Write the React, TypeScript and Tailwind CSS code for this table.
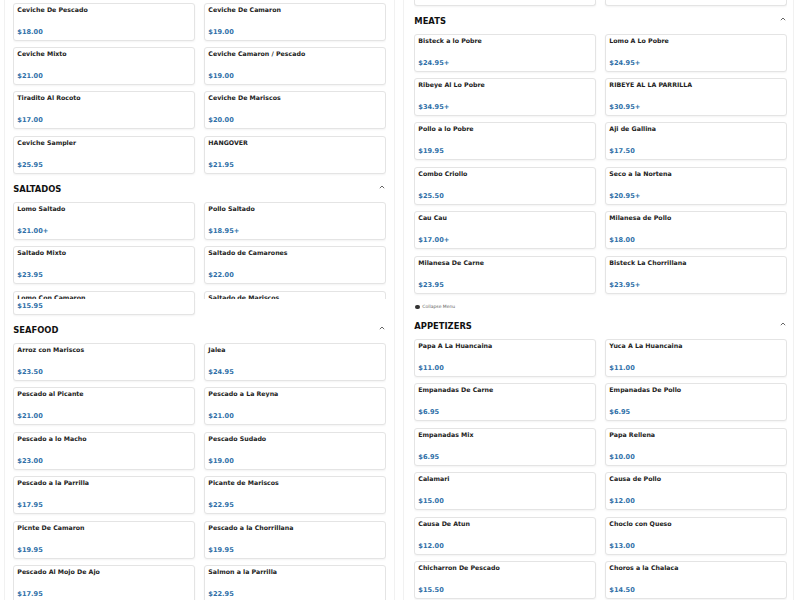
import React from "react";

type Item = { name: string; price?: string };

const FONT = { fontFamily: '"DejaVu Sans", "Liberation Sans", sans-serif' };

function Card({ item }: { item: Item }) {
  return (
    <div className="h-[38px] flex flex-col justify-between rounded-[3px] border border-[#e4e4e4] bg-white pl-[3px] pr-[3px] pt-[2px] pb-[4px] shadow-[0_1px_2px_rgba(0,0,0,0.05)]">
      <div className="text-[6.25px] leading-[8px] font-bold text-[#222] whitespace-nowrap">{item.name}</div>
      <div className="text-[6.6px] leading-[8px] font-bold text-[#2e6fa7] whitespace-nowrap">{item.price ?? ""}</div>
    </div>
  );
}

function Grid({ items }: { items: Item[] }) {
  return (
    <div className="grid grid-cols-2 gap-x-[9.7px] gap-y-[6.4px]">
      {items.map((it, i) => (
        <Card key={i} item={it} />
      ))}
    </div>
  );
}

function Chevron() {
  return (
    <svg width="6" height="4" viewBox="0 0 6 4" className="mb-[4px] mr-[1px]">
      <polyline points="0.8,3.2 3,1 5.2,3.2" fill="none" stroke="#555" strokeWidth="0.9" />
    </svg>
  );
}

function Heading({ title }: { title: string }) {
  return (
    <div className="flex items-center justify-between pt-[9px] pb-[7px]">
      <div className="text-[8.4px] leading-[12px] font-bold text-[#111] tracking-normal">{title}</div>
      <Chevron />
    </div>
  );
}

function PartialCard({ price, h }: { price?: string; h: string }) {
  return (
    <div
      className={`${h} flex flex-col justify-end rounded-b-[3px] border-x border-b border-[#e4e4e4] bg-white pl-[3px] pb-[4px] shadow-[0_1px_2px_rgba(0,0,0,0.05)]`}
    >
      {price ? (
        <div className="text-[6.6px] leading-[8px] font-bold text-[#2e6fa7]">{price}</div>
      ) : null}
    </div>
  );
}

const ceviche: Item[] = [
  { name: "Ceviche De Pescado", price: "$18.00" },
  { name: "Ceviche De Camaron", price: "$19.00" },
  { name: "Ceviche Mixto", price: "$21.00" },
  { name: "Ceviche Camaron / Pescado", price: "$19.00" },
  { name: "Tiradito Al Rocoto", price: "$17.00" },
  { name: "Ceviche De Mariscos", price: "$20.00" },
  { name: "Ceviche Sampler", price: "$25.95" },
  { name: "HANGOVER", price: "$21.95" },
];

const saltados: Item[] = [
  { name: "Lomo Saltado", price: "$21.00+" },
  { name: "Pollo Saltado", price: "$18.95+" },
  { name: "Saltado Mixto", price: "$23.95" },
  { name: "Saltado de Camarones", price: "$22.00" },
  { name: "Lomo Con Camaron" },
  { name: "Saltado de Mariscos" },
];

const seafood: Item[] = [
  { name: "Arroz con Mariscos", price: "$23.50" },
  { name: "Jalea", price: "$24.95" },
  { name: "Pescado al Picante", price: "$21.00" },
  { name: "Pescado a La Reyna", price: "$21.00" },
  { name: "Pescado a lo Macho", price: "$23.00" },
  { name: "Pescado Sudado", price: "$19.00" },
  { name: "Pescado a la Parrilla", price: "$17.95" },
  { name: "Picante de Mariscos", price: "$22.95" },
  { name: "Picnte De Camaron", price: "$19.95" },
  { name: "Pescado a la Chorrillana", price: "$19.95" },
  { name: "Pescado Al Mojo De Ajo", price: "$17.95" },
  { name: "Salmon a la Parrilla", price: "$22.95" },
];

const meats: Item[] = [
  { name: "Bisteck a lo Pobre", price: "$24.95+" },
  { name: "Lomo A Lo Pobre", price: "$24.95+" },
  { name: "Ribeye Al Lo Pobre", price: "$34.95+" },
  { name: "RIBEYE AL LA PARRILLA", price: "$30.95+" },
  { name: "Pollo a lo Pobre", price: "$19.95" },
  { name: "Aji de Gallina", price: "$17.50" },
  { name: "Combo Criollo", price: "$25.50" },
  { name: "Seco a la Nortena", price: "$20.95+" },
  { name: "Cau Cau", price: "$17.00+" },
  { name: "Milanesa de Pollo", price: "$18.00" },
  { name: "Milanesa De Carne", price: "$23.95" },
  { name: "Bisteck La Chorrillana", price: "$23.95+" },
];

const appetizers: Item[] = [
  { name: "Papa A La Huancaina", price: "$11.00" },
  { name: "Yuca A La Huancaina", price: "$11.00" },
  { name: "Empanadas De Carne", price: "$6.95" },
  { name: "Empanadas De Pollo", price: "$6.95" },
  { name: "Empanadas Mix", price: "$6.95" },
  { name: "Papa Rellena", price: "$10.00" },
  { name: "Calamari", price: "$15.00" },
  { name: "Causa de Pollo", price: "$12.00" },
  { name: "Causa De Atun", price: "$12.00" },
  { name: "Choclo con Queso", price: "$13.00" },
  { name: "Chicharron De Pescado", price: "$15.50" },
  { name: "Choros a la Chalaca", price: "$14.50" },
];

export default function App() {
  return (
    <div className="w-[800px] h-[600px] overflow-hidden bg-white flex" style={FONT}>
      {/* Left column */}
      <div className="w-[400px] h-[600px] pl-[4px] pr-[5px]">
        <div className="h-full border-x border-[#f1f1f1] px-[8.3px] flex flex-col">
          <div className="h-[299px] overflow-hidden pt-[2.7px]">
            <Grid items={ceviche} />
            <Heading title="SALTADOS" />
            <Grid items={saltados} />
          </div>
          <div className="h-[301px] overflow-hidden">
            <div className="grid grid-cols-2 gap-x-[9.7px]">
              <PartialCard h="h-[16px]" price="$15.95" />
            </div>
            <Heading title="SEAFOOD" />
            <Grid items={seafood} />
          </div>
        </div>
      </div>
      {/* Right column */}
      <div className="w-[400px] h-[600px] pl-[3px] pr-[6px]">
        <div className="h-full border-x border-[#f1f1f1] px-[10.3px] pr-[6.3px] flex flex-col">
          <div className="h-[297px] overflow-hidden">
            <div className="grid grid-cols-2 gap-x-[9.7px]">
              <PartialCard h="h-[5.7px]" />
              <PartialCard h="h-[5.7px]" />
            </div>
            <Heading title="MEATS" />
            <Grid items={meats} />
          </div>
          <div className="h-[303px] overflow-hidden pt-[6px]">
            <div className="h-[8px] flex items-center gap-[2.5px] pl-[1px]">
              <span className="w-[4.5px] h-[4.5px] rounded-full bg-[#333]" />
              <span className="text-[4.5px] leading-[8px] text-[#666]">Collapse Menu</span>
            </div>
            <Heading title="APPETIZERS" />
            <Grid items={appetizers} />
          </div>
        </div>
      </div>
    </div>
  );
}
